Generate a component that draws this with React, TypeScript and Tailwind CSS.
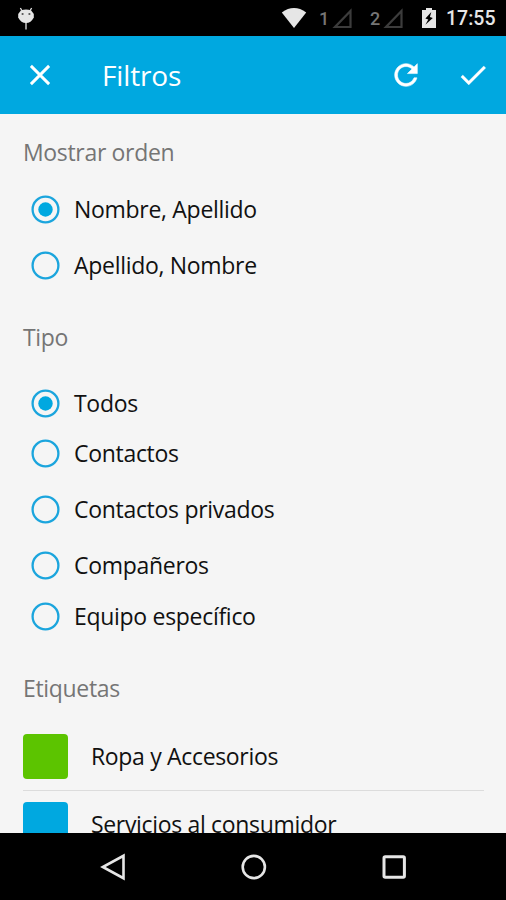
import { useState } from 'react';
import clsx from 'clsx';

interface Option {
  id: string;
  label: string;
  height: string;
}

const ORDER_OPTIONS: Option[] = [
  { id: 'first', label: 'Nombre, Apellido', height: 'h-14' },
  { id: 'last', label: 'Apellido, Nombre', height: 'h-[57px]' },
];

const TYPE_OPTIONS: Option[] = [
  { id: 'all', label: 'Todos', height: 'h-[50px]' },
  { id: 'contacts', label: 'Contactos', height: 'h-[51px]' },
  { id: 'private', label: 'Contactos privados', height: 'h-[61px]' },
  { id: 'coworkers', label: 'Compañeros', height: 'h-[51px]' },
  { id: 'team', label: 'Equipo específico', height: 'h-[51px]' },
];

const TAGS = [
  { label: 'Ropa y Accesorios', color: 'bg-[#5cc400]' },
  { label: 'Servicios al consumidor', color: 'bg-[#00a8e0]' },
];

export default function App() {
  const [order, setOrder] = useState('first');
  const [type, setType] = useState('all');

  return (
    <div className="flex h-[900px] w-[506px] flex-col overflow-hidden bg-[#f5f5f5] font-['Open_Sans',sans-serif]">
      <StatusBar />

      {/* Toolbar */}
      <header className="flex h-[78px] shrink-0 items-center bg-[#00a8e0] text-white">
        <button type="button" aria-label="Cerrar" className="ml-[29px]">
          <svg width="22" height="22" viewBox="0 0 22 22" fill="none" stroke="currentColor" strokeWidth="2.9">
            <path d="M1.9 1.9 20.1 20.1M20.1 1.9 1.9 20.1" />
          </svg>
        </button>
        <h1 className="ml-[51px] flex-1 text-[28px] leading-9 font-medium tracking-[-0.15px]">Filtros</h1>
        <button type="button" aria-label="Restablecer">
          <svg width="34" height="34" viewBox="0 0 24 24" fill="currentColor" stroke="currentColor" strokeWidth="0.4">
            <path d="M17.65 6.35C16.2 4.9 14.21 4 12 4c-4.42 0-7.99 3.58-7.99 8s3.57 8 7.99 8c3.73 0 6.84-2.55 7.73-6h-2.08c-.82 2.33-3.04 4-5.65 4-3.31 0-6-2.69-6-6s2.69-6 6-6c1.66 0 3.14.69 4.22 1.78L13 11h7V4l-2.35 2.35z" />
          </svg>
        </button>
        <button type="button" aria-label="Aplicar" className="mr-4 ml-[33px]">
          <svg width="34" height="34" viewBox="0 0 24 24" fill="currentColor" stroke="currentColor" strokeWidth="0.2">
            <path d="M9 16.17 4.83 12l-1.42 1.41L9 19 21 7l-1.41-1.41z" />
          </svg>
        </button>
      </header>

      <main className="min-h-0 flex-1 overflow-hidden">
        <section>
          <SectionTitle className="h-[67px] pt-[21px]">Mostrar orden</SectionTitle>
          {ORDER_OPTIONS.map((option) => (
            <RadioRow key={option.id} option={option} checked={order === option.id} onSelect={setOrder} />
          ))}
        </section>

        <section>
          <SectionTitle className="h-[84px] pt-[26px]">Tipo</SectionTitle>
          {TYPE_OPTIONS.map((option) => (
            <RadioRow key={option.id} option={option} checked={type === option.id} onSelect={setType} />
          ))}
        </section>

        <section>
          <SectionTitle className="h-[81px] pt-[29px]">Etiquetas</SectionTitle>
          <ul className="mr-[22px] ml-[23px]">
            {TAGS.map((tag) => (
              <li key={tag.label} className="flex h-[68px] items-center border-b border-[#dcdcdc]">
                <span className={clsx('size-[45px] rounded', tag.color)} />
                <span className="ml-[23px] pb-px text-[23px] leading-8 tracking-[-0.33px] text-[#111]">{tag.label}</span>
              </li>
            ))}
          </ul>
        </section>
      </main>

      {/* Navigation buttons */}
      <nav className="flex h-[67px] shrink-0 items-center bg-black text-[#e6e6e6]">
        <svg className="ml-[100px]" width="28" height="28" viewBox="0 0 28 28" fill="none" stroke="currentColor" strokeWidth="2.6">
          <path d="M23.5 2.8v22.4L2.8 14z" />
        </svg>
        <svg className="ml-[112px]" width="28" height="28" viewBox="0 0 28 28" fill="none" stroke="currentColor" strokeWidth="2.6">
          <circle cx="13.8" cy="14" r="11.1" />
        </svg>
        <svg className="ml-[112px]" width="28" height="28" viewBox="0 0 28 28" fill="none" stroke="currentColor" strokeWidth="3">
          <rect x="4" y="3.8" width="20.4" height="20.4" rx="1.2" />
        </svg>
      </nav>
    </div>
  );
}

function StatusBar() {
  return (
    <div className="flex h-9 shrink-0 items-center bg-black font-[Roboto,sans-serif] text-[#e6e6e6]">
      <svg className="ml-[17px]" width="18" height="24" viewBox="0 0 18 24">
        <path d="M4.8 4.5 3.4 2M13.2 4.5l1.4-2.5M9 16v7.5" stroke="#e6e6e6" strokeWidth="1.3" />
        <path d="M1.2 8 4 4.2Q9 2.6 14 4.2L16.8 8v3.5Q14 17 9 17T1.2 11.5z" fill="#e6e6e6" />
        <circle cx="5.6" cy="8" r="1.1" fill="#555" />
        <circle cx="12.4" cy="8" r="1.1" fill="#555" />
      </svg>
      <svg className="ml-[246px]" width="26" height="22" viewBox="0 0 26 22" fill="currentColor">
        <path d="M.8 5.5Q13-3.3 25.2 5.5L13 21z" />
      </svg>
      <Signal slot="1" className="ml-3" />
      <Signal slot="2" className="ml-[17px]" />
      <svg className="ml-[18px]" width="14" height="22" viewBox="0 0 14 22">
        <path d="M4 1h6v2h4v18H0V3h4z" fill="#e6e6e6" />
        <path d="M9.3 5 3.4 11.6l2.9 1-2.9 5.2 7.4-6.9-2.9-1z" fill="#000" />
      </svg>
      <span className="mt-0.5 ml-[10px] text-[19.5px] leading-6 font-medium">17:55</span>
    </div>
  );
}

function Signal({ slot, className }: { slot: string; className: string }) {
  return (
    <div className={clsx('flex items-center', className)}>
      <span className="mt-0.5 w-[13px] text-[18px] leading-6 font-medium text-[#757575]">{slot}</span>
      <svg width="21" height="21" viewBox="0 0 21 21" fill="none" stroke="#3c3c3c" strokeWidth="2.2">
        <path d="M18.5 3v16H3z" />
      </svg>
    </div>
  );
}

function SectionTitle({ className, children }: { className: string; children: React.ReactNode }) {
  return (
    <h2 className={clsx('pl-[23px] text-[23px] leading-[34px] tracking-[-0.33px] text-[#757575]', className)}>
      {children}
    </h2>
  );
}

interface RadioRowProps {
  option: Option;
  checked: boolean;
  onSelect: (id: string) => void;
}

function RadioRow({ option, checked, onSelect }: RadioRowProps) {
  return (
    <button
      type="button"
      role="radio"
      aria-checked={checked}
      onClick={() => onSelect(option.id)}
      className={clsx('flex w-full items-center pl-[31px] text-left', option.height)}
    >
      <svg width="29" height="29" viewBox="0 0 29 29" fill="none">
        <circle cx="14.5" cy="14.5" r="12.9" stroke="#1ba5dd" strokeWidth="2.3" />
        {checked && <circle cx="14.5" cy="14.5" r="7.2" fill="#00a8e0" />}
      </svg>
      <span className="ml-[14px] pb-px text-[23px] leading-8 tracking-[-0.3px] text-[#111]">{option.label}</span>
    </button>
  );
}
